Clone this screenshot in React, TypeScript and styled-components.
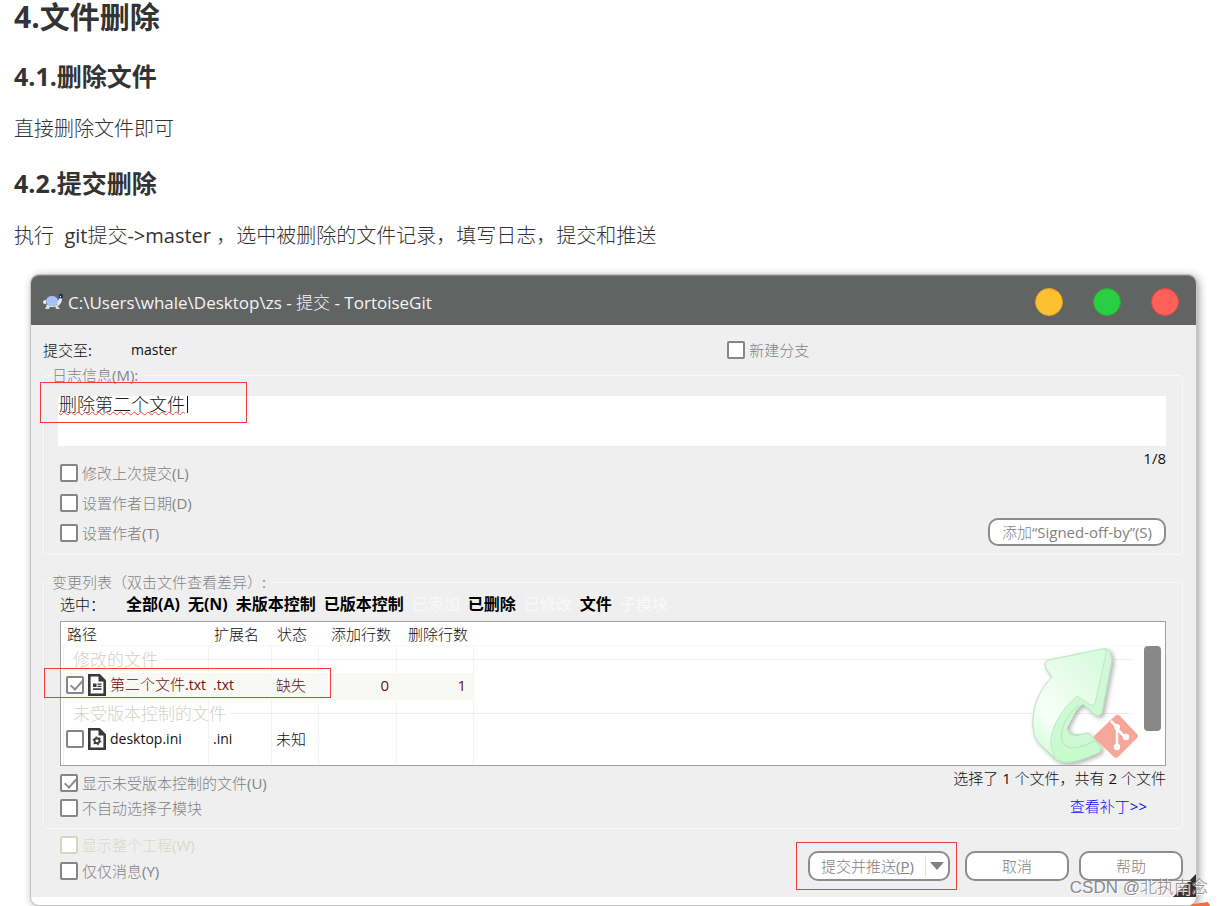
import React from "react";
import styled, { createGlobalStyle } from "styled-components";

const GlobalStyle = createGlobalStyle`
  * { box-sizing: border-box; }
  body {
    margin: 0;
    background: #ffffff;
    overflow-x: hidden;
    font-family: "Open Sans", "Noto Sans CJK SC Light", "Noto Sans CJK SC", sans-serif;
  }
  button, input, textarea { font-family: inherit; margin: 0; }
`;

const boldStack = `"Open Sans", "Noto Sans CJK SC", sans-serif`;

const Page = styled.main`
  position: relative;
  padding-bottom: 1px;
`;

const Article = styled.article`
  padding: 0 14px;
  color: #333333;
`;

const Title = styled.h2`
  margin: 0;
  font-family: ${boldStack};
  font-size: 30px;
  line-height: 34px;
  font-weight: 700;
`;

const Subtitle = styled.h3`
  margin: 26px 0 25px;
  font-family: ${boldStack};
  font-size: 25px;
  line-height: 32px;
  font-weight: 700;
`;

const Paragraph = styled.p`
  margin: 0;
  font-size: 20px;
  line-height: 24px;
`;

const Dialog = styled.section`
  margin: 27px 28px 0 31px;
  padding-bottom: 8px;
  border-radius: 8px;
  background: #ffffff;
  box-shadow: 0 0 0 1px #c4c4c4, 2px 2px 10px rgba(0, 0, 0, 0.45);
`;

const TitleBar = styled.header`
  display: flex;
  align-items: center;
  gap: 4px;
  height: 50px;
  padding: 3px 17px 0 12px;
  border-top: 1px solid #7f8180;
  border-radius: 8px 8px 0 0;
  background: #626463;
  color: #f4f4f4;
`;

const DialogTitle = styled.h1`
  flex: 1;
  margin: 0;
  padding-top: 2px;
  font-size: 17px;
  line-height: 24px;
  font-weight: 400;
`;

const WindowButtons = styled.div`
  display: flex;
  gap: 30px;
`;

const WindowButton = styled.button<{ $fill: string; $edge: string }>`
  width: 28px;
  height: 28px;
  padding: 0;
  border: 1px solid ${(p) => p.$edge};
  border-radius: 50%;
  background: ${(p) => p.$fill};
`;

const Body = styled.div`
  position: relative;
  padding: 15px 13px 13px 12px;
  background: #efefef;
  color: #111111;
  font-size: 15px;
  line-height: 20px;
`;

const BranchRow = styled.div`
  display: grid;
  grid-template-columns: 88px 17fr 13fr;
  align-items: center;
  margin-bottom: 5px;
`;

const Latin = styled.span`
  font-size: 14px;
`;

const CheckLabel = styled.label<{ $height: number; $off?: boolean }>`
  display: flex;
  align-items: center;
  gap: 4px;
  height: ${(p) => p.$height}px;
  color: ${(p) => (p.$off ? "#d8d8ce" : "#828282")};
`;

const CheckBox = styled.input.attrs({ type: "checkbox" })`
  appearance: none;
  position: relative;
  flex: none;
  width: 18px;
  height: 18px;
  border: 2px solid #868686;
  border-radius: 2px;
  background: #ffffff;

  &:disabled {
    border-color: #d6d6c4;
  }

  &:checked::after {
    content: "";
    position: absolute;
    left: 5px;
    top: 0;
    width: 5px;
    height: 10px;
    border: solid #8c8c8c;
    border-width: 0 2px 2px 0;
    transform: rotate(42deg);
  }
`;

const Group = styled.fieldset`
  min-width: 0;
  margin: 0;
  padding: 0 16px 6px 14px;
  border: 1px solid #f9f9f9;
  border-radius: 4px;
  box-shadow: inset 1px 0 0 #eaeaea;
`;

const Legend = styled.legend`
  margin-left: -7px;
  padding: 0 7px 0 1px;
  color: #848484;
`;

const MessageArea = styled.div`
  position: relative;
  margin-top: 11px;
`;

const Message = styled.textarea`
  display: block;
  width: 100%;
  height: 50px;
  padding: 0 1px;
  border: 0;
  outline: 0;
  resize: none;
  overflow: hidden;
  background: #ffffff;
  color: #222222;
  font-size: 18px;
  line-height: 16px;
  text-decoration: underline wavy #f04848 1px;
  text-underline-offset: 0;
`;

const Caret = styled.span`
  position: absolute;
  left: 129px;
  top: 0;
  width: 1px;
  height: 17px;
  background: #111111;
`;

const Mark = styled.span`
  position: absolute;
  border: 1px solid #f03c3c;
  pointer-events: none;
`;

const MessageMark = styled(Mark)`
  left: -18px;
  top: -14px;
  width: 207px;
  height: 41px;
`;

const RowMark = styled(Mark)`
  left: -16px;
  top: 47px;
  width: 287px;
  height: 30px;
`;

const ButtonMark = styled(Mark)`
  inset: -11px -9px -11px -14px;
`;

const Split = styled.div`
  display: flex;
  justify-content: space-between;
`;

const Stack = styled.div<{ $top: number; $bottom: number }>`
  padding: ${(p) => p.$top}px 0 ${(p) => p.$bottom}px 2px;
`;

const RightStack = styled.div<{ $gap: number }>`
  display: flex;
  flex-direction: column;
  align-items: flex-end;
  gap: ${(p) => p.$gap}px;
  padding-top: 2px;
`;

const PillButton = styled.button<{ $width: number; $height: number }>`
  width: ${(p) => p.$width}px;
  height: ${(p) => p.$height}px;
  padding: 0;
  border: 2px solid #8c8c8c;
  border-radius: 10px;
  background: #ffffff;
  color: #828282;
  font-size: 15px;
  line-height: 20px;
`;

const GroupGap = styled.div`
  height: 17px;
`;

const FilterRow = styled.div`
  display: flex;
  gap: 8px;
  padding: 2px 0 0 2px;
  margin-bottom: 7px;
`;

const FilterLabel = styled.span`
  width: 58px;
`;

const FilterButton = styled.button`
  padding: 0;
  border: 0;
  background: none;
  color: #000000;
  && { font-family: ${boldStack}; }
  font-size: 16px;
  line-height: 20px;
  font-weight: 700;
  white-space: nowrap;

  &:disabled {
    color: #f9f9f9;
    font-weight: 400;
  }
`;

const ListArea = styled.div`
  position: relative;
  margin-left: 2px;
`;

const columnLine = (x: number) =>
  `linear-gradient(#f3f3f3, #f3f3f3) ${x}px 24px / 1px 100% no-repeat`;

const ListFrame = styled.div`
  position: relative;
  height: 145px;
  overflow: hidden;
  border: 1px solid #9fa1a8;
  background: ${[2, 147, 210, 257, 335, 412].map(columnLine).join(", ")}, #ffffff;
`;

const Table = styled.table`
  width: 100%;
  table-layout: fixed;
  border-collapse: separate;
  border-spacing: 0;
`;

const HeadCell = styled.th`
  height: 24px;
  padding: 0 0 0 6px;
  border-bottom: 1px solid #f8f8f8;
  text-align: left;
  font-weight: 400;
  white-space: nowrap;
`;

const CountHead = styled(HeadCell)`
  padding: 0 5px 0 0;
  text-align: right;
`;

const GroupCell = styled.th`
  height: 27px;
  padding: 0 34px 0 12px;
  color: #d3d2c8;
  font-size: 17px;
  font-weight: 400;
`;

const GroupTitle = styled.span`
  display: flex;
  align-items: center;
  gap: 5px;
  white-space: nowrap;

  &::after {
    content: "";
    flex: 1;
    height: 1px;
    background: #ececec;
  }
`;

const FileRow = styled.tr<{ $missing?: boolean }>`
  color: ${(p) => (p.$missing ? "#6b1014" : "#111111")};
  --row: ${(p) => (p.$missing ? "#f8f9f5" : "transparent")};
`;

const Cell = styled.td`
  height: 27px;
  padding: 0 0 4px 5px;
  background: var(--row);
  white-space: nowrap;
`;

const CountCell = styled(Cell)`
  padding: 0 7px 4px 0;
  text-align: right;
`;

const FileName = styled.label`
  display: flex;
  align-items: center;
  gap: 4px;
`;

const ScrollThumb = styled.span`
  position: absolute;
  right: 4px;
  top: 24px;
  width: 17px;
  height: 85px;
  border-radius: 4px;
  background: #888886;
`;

const Emblem = styled.svg`
  position: absolute;
  right: 25px;
  bottom: 0;
`;

const PatchLink = styled.a`
  margin-right: 19px;
  color: #0c0cf0;
  text-decoration: none;
`;

const Footer = styled.footer`
  display: flex;
  justify-content: space-between;
  align-items: flex-end;
  padding: 3px 0 0 17px;
`;

const Actions = styled.div`
  display: flex;
  align-items: center;
  gap: 10px;
  padding-bottom: 3px;
`;

const SplitButton = styled.div`
  position: relative;
  display: flex;
  align-items: center;
  width: 142px;
  height: 30px;
  margin-right: 5px;
  border: 2px solid #8c8c8c;
  border-radius: 10px;
  background: #ffffff;
`;

const SplitMain = styled.button`
  flex: 1;
  height: 22px;
  padding: 0;
  border: 0;
  border-right: 1px solid #e4e4e4;
  background: none;
  color: #828282;
  font-size: 15px;
  line-height: 20px;
`;

const SplitArrow = styled.button`
  display: flex;
  align-items: center;
  justify-content: center;
  width: 22px;
  height: 22px;
  padding: 0;
  border: 0;
  background: none;
`;

const Grip = styled.svg`
  position: absolute;
  right: 0;
  bottom: 0;
`;

const Watermark = styled.div`
  position: absolute;
  right: 16px;
  bottom: 6px;
  color: #8a8a8a;
  font-family: "Liberation Sans", "Noto Sans CJK SC", sans-serif;
  font-size: 17px;
  line-height: 24px;
  font-weight: 300;
  text-shadow: 1px 1px 0 #ffffff;
`;

const Corner = styled.svg`
  position: absolute;
  right: 14px;
  bottom: 0;
`;

function TurtleIcon() {
  return (
    <svg width="21" height="18" viewBox="0 0 21 18" aria-hidden="true">
      <path d="M4 12 L2 16 h4 l1-3 M12 12 l1 4 h4 l-3-4" fill="#d9dde2" />
      <path d="M0 9 q0-2 3-2 v4 q-3 0-3-2z M13 10 l4-5 2 1 q0 4-4 7z" fill="#e6ebf2" />
      <ellipse cx="9" cy="8" rx="6" ry="5" fill="#a9c0fa" />
      <path d="M3 11 q6 4 12 0 l-1 2 q-5 2-10 0z" fill="#e8ecf3" />
      <rect x="16" y="1" width="4" height="4" rx="1" fill="#17375e" />
      <path d="M17 3 l1 1" stroke="#ffffff" />
    </svg>
  );
}

function FileIcon({ kind }: { kind: "text" | "config" }) {
  return (
    <svg width="18" height="22" viewBox="0 0 18 22" aria-hidden="true">
      <path d="M1.3 1.3 h10 l5.400 5.400 v14 h-15.400z" fill="#ffffff" stroke="#393939" strokeWidth="2.600" />
      <path d="M10.500 1 v6.500 h6.500z" fill="#393939" />
      {kind === "text" ? (
        <g fill="#393939">
          <rect x="5" y="9.500" width="3.500" height="3.500" />
          <rect x="9.500" y="9.500" width="4" height="1.300" />
          <rect x="9.500" y="11.800" width="4" height="1.300" />
          <rect x="5" y="14.300" width="8.500" height="1.600" />
        </g>
      ) : (
        <g fill="none" stroke="#393939">
          <circle cx="9" cy="12.800" r="2.500" strokeWidth="1.900" />
          <circle cx="9" cy="12.800" r="3.900" strokeWidth="1.200" strokeDasharray="1.500 2.580" />
        </g>
      )}
    </svg>
  );
}

function CommitEmblem() {
  return (
    <Emblem width="110" height="118" viewBox="0 0 110 118" aria-hidden="true">
      <defs>
        <linearGradient id="face" x1="0" y1="1" x2="0.700" y2="0">
          <stop offset="0" stopColor="#c9fbd0" />
          <stop offset="0.350" stopColor="#f7fff8" />
          <stop offset="1" stopColor="#d9fbde" />
        </linearGradient>
        <linearGradient id="side" x1="0" y1="0" x2="0" y2="1">
          <stop offset="0" stopColor="#d6f6da" />
          <stop offset="1" stopColor="#c6fbcd" />
        </linearGradient>
        <filter id="shade" x="-10%" y="-10%" width="130%" height="130%">
          <feDropShadow dx="2" dy="2" stdDeviation="2" floodColor="#555555" floodOpacity="0.450" />
        </filter>
      </defs>
      <g filter="url(#shade)" strokeLinejoin="round">
        <path
          d="M73 2 Q78 1 80 5 L82 13 L72 66 Q69 71 64 67 L53 57 C44 64 38 72 37 81 C41 90 49 88 58 86 L71 100 Q72 105 66 107 C52 113 34 120 24 111 L8 95 C-1 84 1 50 22 30 L16 21 Q13 15 19 13Z"
          fill="url(#side)"
          stroke="#b5e3bd"
          strokeWidth="1"
        />
        <path
          d="M72 2 Q77 2 76 7 L65 56 Q63 60 59 57 L47 49 C32 62 19 82 21 99 C21 103 24 108 25 111 L8 95 C-1 84 1 50 22 30 L16 21 Q13 15 19 13Z"
          fill="url(#face)"
          stroke="#bde9c4"
          strokeWidth="1"
        />
        <path
          d="M37 81 C39 92 49 88 58 86 L66 93 C57 98 40 106 33 96 C29 88 33 70 49 58"
          fill="#ccf8d2"
          stroke="#b5e3bd"
          strokeWidth="1"
        />
      </g>
      <path d="M86 68 Q88 67 90 69 L107 87 Q109 89 107 91 L88 110 Q86 112 84 110 L65 92 Q63 90 65 88Z" fill="#f7a79a" />
      <path d="M81 74 L87 80 V102 M87 82 L96 91" stroke="#ffffff" strokeWidth="2.500" fill="none" />
      <circle cx="87" cy="80" r="3" fill="#ffffff" />
      <circle cx="96" cy="90" r="3.200" fill="#ffffff" />
      <circle cx="87" cy="100" r="3.200" fill="#ffffff" />
    </Emblem>
  );
}

function Check(props: { label: string; height: number; checked?: boolean; disabled?: boolean }) {
  return (
    <CheckLabel $height={props.height} $off={props.disabled}>
      <CheckBox defaultChecked={props.checked} disabled={props.disabled} />
      {props.label}
    </CheckLabel>
  );
}

const filters = [
  { text: "全部(A)", on: true },
  { text: "无(N)", on: true },
  { text: "未版本控制", on: true },
  { text: "已版本控制", on: true },
  { text: "已添加", on: false },
  { text: "已删除", on: true },
  { text: "已修改", on: false },
  { text: "文件", on: true },
  { text: "子模块", on: false },
];

function FileList() {
  return (
    <ListArea>
      <ListFrame>
        <Table>
          <colgroup>
            <col width="147" />
            <col width="63" />
            <col width="47" />
            <col width="78" />
            <col width="77" />
            <col />
          </colgroup>
          <thead>
            <tr>
              <HeadCell>路径</HeadCell>
              <HeadCell>扩展名</HeadCell>
              <HeadCell>状态</HeadCell>
              <CountHead>添加行数</CountHead>
              <CountHead>删除行数</CountHead>
              <HeadCell aria-hidden="true" />
            </tr>
          </thead>
          <tbody>
            <tr>
              <GroupCell colSpan={6}>
                <GroupTitle>修改的文件</GroupTitle>
              </GroupCell>
            </tr>
            <FileRow $missing>
              <Cell>
                <FileName>
                  <CheckBox defaultChecked />
                  <FileIcon kind="text" />
                  <span>
                    第二个文件<Latin>.txt</Latin>
                  </span>
                </FileName>
              </Cell>
              <Cell>
                <Latin>.txt</Latin>
              </Cell>
              <Cell>缺失</Cell>
              <CountCell>0</CountCell>
              <CountCell>1</CountCell>
              <td />
            </FileRow>
            <tr>
              <GroupCell colSpan={6}>
                <GroupTitle>未受版本控制的文件</GroupTitle>
              </GroupCell>
            </tr>
            <FileRow>
              <Cell>
                <FileName>
                  <CheckBox />
                  <FileIcon kind="config" />
                  <Latin>desktop.ini</Latin>
                </FileName>
              </Cell>
              <Cell>
                <Latin>.ini</Latin>
              </Cell>
              <Cell>未知</Cell>
              <CountCell />
              <CountCell />
              <td />
            </FileRow>
          </tbody>
        </Table>
        <CommitEmblem />
        <ScrollThumb />
      </ListFrame>
      <RowMark />
    </ListArea>
  );
}

export default function App() {
  return (
    <Page>
      <GlobalStyle />
      <Article>
        <Title>4.文件删除</Title>
        <Subtitle>4.1.删除文件</Subtitle>
        <Paragraph>直接删除文件即可</Paragraph>
        <Subtitle>4.2.提交删除</Subtitle>
        <Paragraph>执行&nbsp; git提交-&gt;master ，选中被删除的文件记录，填写日志，提交和推送</Paragraph>
      </Article>

      <Dialog>
        <TitleBar>
          <TurtleIcon />
          <DialogTitle>C:\Users\whale\Desktop\zs - 提交 - TortoiseGit</DialogTitle>
          <WindowButtons>
            <WindowButton aria-label="最小化" $fill="#ffc02f" $edge="#dea32a" />
            <WindowButton aria-label="最大化" $fill="#2ace42" $edge="#22ae35" />
            <WindowButton aria-label="关闭" $fill="#ff6058" $edge="#e0453f" />
          </WindowButtons>
        </TitleBar>

        <Body>
          <BranchRow>
            <span>提交至:</span>
            <Latin>master</Latin>
            <Check label="新建分支" height={20} />
          </BranchRow>

          <Group>
            <Legend>
              <label htmlFor="message">日志信息(M):</label>
            </Legend>
            <MessageArea>
              <Message id="message" spellCheck={false} defaultValue="删除第二个文件" />
              <Caret />
              <MessageMark />
            </MessageArea>
            <Split>
              <Stack $top={12} $bottom={0}>
                <Check label="修改上次提交(L)" height={30} />
                <Check label="设置作者日期(D)" height={30} />
                <Check label="设置作者(T)" height={30} />
              </Stack>
              <RightStack $gap={50}>
                <span>1/8</span>
                <PillButton $width={178} $height={28}>
                  添加“Signed-off-by”(S)
                </PillButton>
              </RightStack>
            </Split>
          </Group>
          <GroupGap />
          <Group>
            <Legend>变更列表（双击文件查看差异）:</Legend>
            <FilterRow>
              <FilterLabel>选中：</FilterLabel>
              {filters.map((f) => (
                <FilterButton key={f.text} disabled={!f.on}>
                  {f.text}
                </FilterButton>
              ))}
            </FilterRow>
            <FileList />
            <Split>
              <Stack $top={4} $bottom={2}>
                <Check label="显示未受版本控制的文件(U)" height={25} checked />
                <Check label="不自动选择子模块" height={25} />
              </Stack>
              <RightStack $gap={8}>
                <span>选择了 1 个文件，共有 2 个文件</span>
                <PatchLink href="#patch">查看补丁&gt;&gt;</PatchLink>
              </RightStack>
            </Split>
          </Group>

          <Footer>
            <div>
              <Check label="显示整个工程(W)" height={26} disabled />
              <Check label="仅仅消息(Y)" height={26} />
            </div>
            <Actions>
              <SplitButton>
                <SplitMain>
                  提交并推送(<u>P</u>)
                </SplitMain>
                <SplitArrow aria-label="更多提交方式">
                  <svg width="14" height="8" viewBox="0 0 14 8" aria-hidden="true">
                    <path d="M0 0 h14 l-7 8z" fill="#808080" />
                  </svg>
                </SplitArrow>
                <ButtonMark />
              </SplitButton>
              <PillButton $width={104} $height={30}>
                取消
              </PillButton>
              <PillButton $width={104} $height={30}>
                帮助
              </PillButton>
            </Actions>
          </Footer>
          <Grip width="23" height="23" viewBox="0 0 23 23" aria-hidden="true">
            <path d="M23 0 V23 H0z" fill="#2f2f2f" />
          </Grip>
        </Body>
      </Dialog>

      <Corner width="20" height="4" viewBox="0 0 20 4" aria-hidden="true">
        <path d="M0 4 L3 2 L18 0 L20 4z" fill="#fc6a3c" />
      </Corner>
      <Watermark>CSDN @北执南念</Watermark>
    </Page>
  );
}
